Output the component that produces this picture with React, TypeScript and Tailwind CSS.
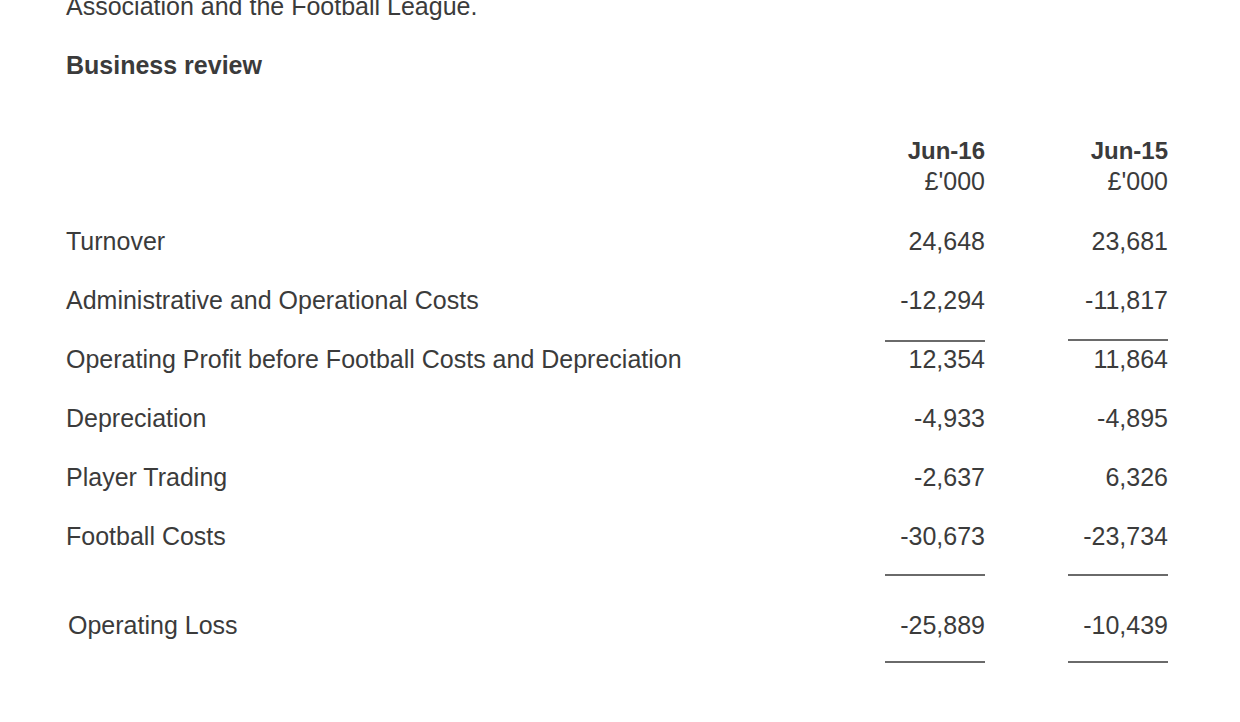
const rows = [
  { label: "Turnover", a: "24,648", b: "23,681" },
  { label: "Administrative and Operational Costs", a: "-12,294", b: "-11,817" },
  { label: "Operating Profit before Football Costs and Depreciation", a: "12,354", b: "11,864", ruleAbove: true },
  { label: "Depreciation", a: "-4,933", b: "-4,895" },
  { label: "Player Trading", a: "-2,637", b: "6,326" },
  { label: "Football Costs", a: "-30,673", b: "-23,734" },
]

function Rule() {
  return <div className="h-[2px] w-[100px] bg-[#6a6a6a]" />
}

export default function App() {
  return (
    <div
      className="w-[1240px] h-[722px] overflow-hidden bg-white text-[#3b3b3b] pl-[66px] pr-[72px]"
      style={{ fontFamily: '"Liberation Sans", Arial, sans-serif' }}
    >
      <p className="text-[25px] leading-none -mt-[6px]">Association and the Football League.</p>

      <h2 className="mt-[34px] text-[25px] font-bold leading-none">Business review</h2>

      <div className="mt-[58px] grid grid-cols-[1fr_100px_100px] gap-x-[83px] text-[25px]">
        <div />
        <div className="text-right leading-[30px]">
          <div className="font-bold text-[24px]">Jun-16</div>
          <div>£'000</div>
        </div>
        <div className="text-right leading-[30px]">
          <div className="font-bold text-[24px]">Jun-15</div>
          <div>£'000</div>
        </div>
      </div>

      <div className="mt-[16px] text-[25px]">
        {rows.map((r) => (
          <div key={r.label} className="grid grid-cols-[1fr_100px_100px] gap-x-[83px] h-[59px] items-center">
            <div>{r.label}</div>
            <div className="relative text-right">
              {r.ruleAbove && <div className="absolute -top-[1px] right-0"><Rule /></div>}
              {r.a}
            </div>
            <div className="relative text-right">
              {r.ruleAbove && <div className="absolute -top-[2px] right-0"><Rule /></div>}
              {r.b}
            </div>
          </div>
        ))}

        <div className="grid grid-cols-[1fr_100px_100px] gap-x-[83px] h-[30px] items-start">
          <div />
          <div className="flex justify-end pt-[8px]"><Rule /></div>
          <div className="flex justify-end pt-[8px]"><Rule /></div>
        </div>

        <div className="grid grid-cols-[1fr_100px_100px] gap-x-[83px] h-[59px] items-center">
          <div className="pl-[2px]">Operating Loss</div>
          <div className="text-right">-25,889</div>
          <div className="text-right">-10,439</div>
        </div>

        <div className="grid grid-cols-[1fr_100px_100px] gap-x-[83px] h-[20px] items-start">
          <div />
          <div className="flex justify-end pt-[6px]"><Rule /></div>
          <div className="flex justify-end pt-[6px]"><Rule /></div>
        </div>
      </div>
    </div>
  )
}
